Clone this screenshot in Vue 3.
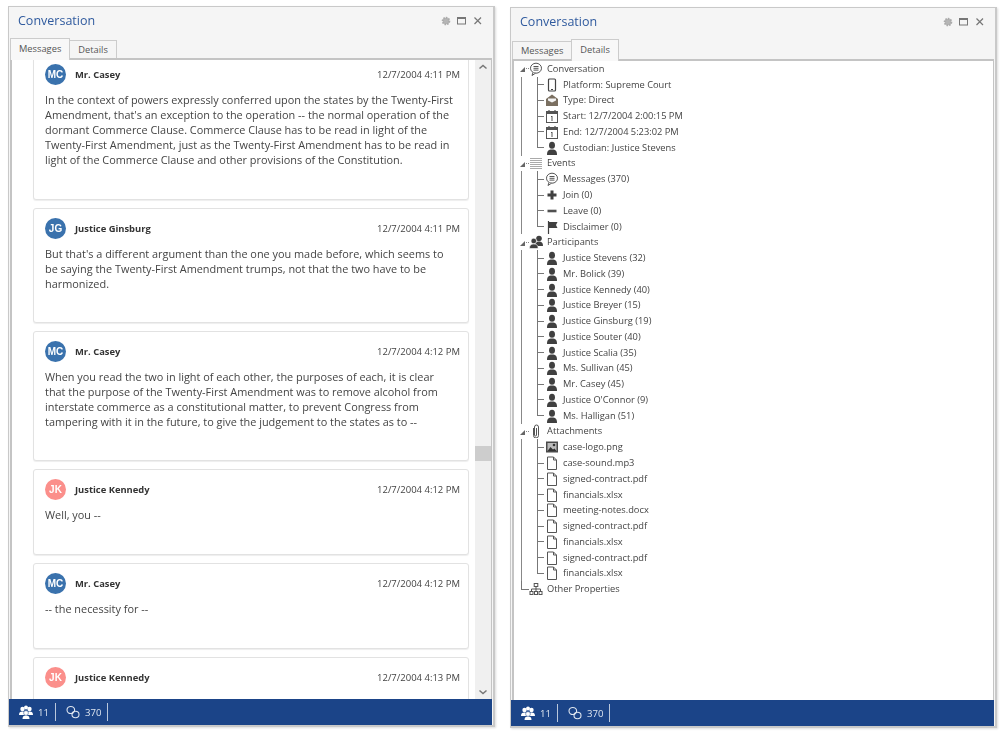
<script setup>
const messages = [
  { i: 'MC', c: 'blue', name: 'Mr. Casey', time: '12/7/2004 4:11 PM', h: 146, lines: ["In the context of powers expressly conferred upon the states by the Twenty-First", "Amendment, that's an exception to the operation -- the normal operation of the", "dormant Commerce Clause. Commerce Clause has to be read in light of the", "Twenty-First Amendment, just as the Twenty-First Amendment has to be read in", "light of the Commerce Clause and other provisions of the Constitution."] },
  { i: 'JG', c: 'blue', name: 'Justice Ginsburg', time: '12/7/2004 4:11 PM', h: 115, lines: ["But that's a different argument than the one you made before, which seems to", "be saying the Twenty-First Amendment trumps, not that the two have to be", "harmonized."] },
  { i: 'MC', c: 'blue', name: 'Mr. Casey', time: '12/7/2004 4:12 PM', h: 130, lines: ["When you read the two in light of each other, the purposes of each, it is clear", "that the purpose of the Twenty-First Amendment was to remove alcohol from", "interstate commerce as a constitutional matter, to prevent Congress from", "tampering with it in the future, to give the judgement to the states as to --"] },
  { i: 'JK', c: 'pink', name: 'Justice Kennedy', time: '12/7/2004 4:12 PM', h: 86, lines: ["Well, you --"] },
  { i: 'MC', c: 'blue', name: 'Mr. Casey', time: '12/7/2004 4:12 PM', h: 86, lines: ["-- the necessity for --"] },
  { i: 'JK', c: 'pink', name: 'Justice Kennedy', time: '12/7/2004 4:13 PM', h: 86, lines: ["-- of the the licenses and permits you will to do it --"] },
]
const sections = [
  { label: 'Conversation', icon: 'chat', open: true, items: [
    ['Platform: Supreme Court', 'phone'], ['Type: Direct', 'mail'], ['Start: 12/7/2004 2:00:15 PM', 'cal'], ['End: 12/7/2004 5:23:02 PM', 'cal'], ['Custodian: Justice Stevens', 'person'] ] },
  { label: 'Events', icon: 'list', open: true, items: [
    ['Messages (370)', 'chat'], ['Join (0)', 'plus'], ['Leave (0)', 'minus'], ['Disclaimer (0)', 'flag'] ] },
  { label: 'Participants', icon: 'people', open: true, items: [
    'Justice Stevens (32)', 'Mr. Bolick (39)', 'Justice Kennedy (40)', 'Justice Breyer (15)', 'Justice Ginsburg (19)', 'Justice Souter (40)', 'Justice Scalia (35)', 'Ms. Sullivan (45)', 'Mr. Casey (45)', "Justice O'Connor (9)", 'Ms. Halligan (51)' ].map(n => [n, 'person']) },
  { label: 'Attachments', icon: 'clip', open: true, items: [
    ['case-logo.png', 'image'], ...['case-sound.mp3', 'signed-contract.pdf', 'financials.xlsx', 'meeting-notes.docx', 'signed-contract.pdf', 'financials.xlsx', 'signed-contract.pdf', 'financials.xlsx'].map(n => [n, 'file']) ] },
  { label: 'Other Properties', icon: 'org', open: false, items: [] },
]
const icons = {
  chat: '<ellipse cx="7" cy="6.200" rx="5.500" ry="5" fill="none" stroke="#555" stroke-width="1"/><path d="M4 10.500l-1 3 3.500-2.300" fill="#fff" stroke="#555"/><path d="M4.500 4.500h5M4.500 6.300h5M4.500 8.100h5" stroke="#555"/>',
  phone: '<rect x="3.500" y="1" width="7" height="12" rx="1" fill="none" stroke="#444" stroke-width="1.200"/><path d="M6 11.500h2" stroke="#444"/>',
  mail: '<path d="M1 6l6-4.500L13 6v7H1z" fill="#7a6f60"/><path d="M3 5.500h8v2L7 9.500l-4-2z" fill="#f4f4f4"/>',
  cal: '<rect x="1.500" y="2.500" width="11" height="11" fill="#fff" stroke="#555"/><rect x="1.500" y="2.500" width="11" height="2.500" fill="#555"/><path d="M4 1v2M10 1v2" stroke="#555" stroke-width="1.200"/><path d="M7 7v5M6 8l1-1" stroke="#555"/>',
  person: '<ellipse cx="7" cy="4.300" rx="3" ry="3.500" fill="#404040"/><path d="M2 14c0-4 1.200-5.500 5-5.500s5 1.500 5 5.500z" fill="#404040"/>',
  list: '<path d="M1 2.500h12M1 4.500h12M1 6.500h12M1 8.500h12M1 10.500h12M1 12.500h12" stroke="#aaa"/>',
  plus: '<path d="M7 2.500v9M2.500 7h9" stroke="#404040" stroke-width="3"/>',
  minus: '<path d="M2.500 7h9" stroke="#505050" stroke-width="2.600"/>',
  flag: '<path d="M3.500 1v13" stroke="#404040" stroke-width="1.200"/><path d="M4 2h8.500l-1.500 3 1.500 3H4z" fill="#404040"/>',
  people: '<circle cx="10" cy="3.500" r="2.800" fill="#404040"/><path d="M6 11c0-3 1-4.500 4-4.500s4 1.500 4 4.500z" fill="#404040"/><circle cx="4.800" cy="6" r="2.800" fill="#404040" stroke="#fff" stroke-width=".6"/><path d="M.5 13.500c0-3 1-4.500 4.300-4.500s4.300 1.500 4.300 4.500z" fill="#404040" stroke="#fff" stroke-width=".6"/>',
  clip: '<path d="M4.500 4v7.500a2.500 2.500 0 0 0 5 0V3a2 2 0 0 0-4 0v8a1 1 0 0 0 2 0V4" fill="none" stroke="#555" stroke-width="1"/>',
  image: '<rect x="1" y="1.500" width="12" height="11" fill="#4a4a4a"/><rect x="2.500" y="3" width="9" height="8" fill="#bbb"/><circle cx="9" cy="5" r="1.300" fill="#333"/><path d="M2.500 11l3-4 2.500 2.500 1.500-1 2 2.500z" fill="#333"/>',
  file: '<path d="M2.500 1h6l3 3v9.500h-9z" fill="#fff" stroke="#555"/><path d="M8.500 1v3h3" fill="none" stroke="#555"/>',
  org: '<rect x="5.200" y="1.500" width="3.600" height="3" fill="none" stroke="#555"/><path d="M7 4.500v2.500M2.500 9V7h9v2M7 7v2" fill="none" stroke="#555"/><rect x="1" y="9.500" width="3" height="3" fill="none" stroke="#555"/><rect x="5.500" y="9.500" width="3" height="3" fill="none" stroke="#555"/><rect x="10" y="9.500" width="3" height="3" fill="none" stroke="#555"/>',
}
const statusPeople = '<circle cx="3.500" cy="4" r="2.200" fill="#fff"/><circle cx="10.500" cy="4" r="2.200" fill="#fff"/><circle cx="7" cy="2.500" r="2" fill="#fff"/><path d="M0 10c0-2.500 1-3.500 3.500-3.500S7 7.500 7 10zM7 10c0-2.500 1-3.500 3.500-3.500S14 7.500 14 10z" fill="#fff"/><circle cx="7" cy="8" r="2.400" fill="#fff" stroke="#1b4488" stroke-width=".5"/><path d="M3.500 14c0-2.500 1-3.500 3.500-3.500s3.500 1 3.500 3.500z" fill="#fff"/>'
const statusChat = '<ellipse cx="4.800" cy="5" rx="3.800" ry="3.500" fill="none" stroke="#dfe6f0" stroke-width="1.100"/><ellipse cx="9.500" cy="9.500" rx="3.500" ry="3.200" fill="none" stroke="#dfe6f0" stroke-width="1.100"/>'
</script>

<template>
  <div class="page">
    <section class="win left">
      <header class="head">
        <h1>Conversation</h1>
        <div class="controls">
          <svg width="10" height="10" viewBox="0 0 10 10"><circle cx="5" cy="5" r="3.300" fill="#b5b5b5" stroke="#aaa" stroke-width="2" stroke-dasharray="1.500 1"/></svg>
          <svg width="10" height="10" viewBox="0 0 10 10"><rect x=".5" y="1.500" width="8" height="6.500" fill="none" stroke="#777"/><path d="M.5 2.500h8" stroke="#777"/></svg>
          <svg width="10" height="10" viewBox="0 0 10 10"><path d="M1.500 1.500l6.500 6.500M8 1.500L1.500 8" stroke="#777" stroke-width="1.200"/></svg>
        </div>
      </header>
      <nav class="tabs">
        <span class="tab on">Messages</span>
        <span class="tab">Details</span>
      </nav>
      <div class="body">
        <div class="msgs">
          <div class="list">
            <article v-for="(m, k) in messages" :key="k" class="card" :style="{ height: m.h + 'px' }">
              <div class="top">
                <span class="av" :class="m.c">{{ m.i }}</span>
                <b class="name">{{ m.name }}</b>
                <span class="time">{{ m.time }}</span>
              </div>
              <p class="text">
                <span v-for="(l, n) in m.lines" :key="n" class="ln">{{ l }}</span>
              </p>
            </article>
          </div>
        </div>
        <aside class="sb">
          <svg class="arr" width="16" height="12" viewBox="0 0 16 12"><path d="M4.500 7.500L8 4.500l3.500 3" fill="none" stroke="#777" stroke-width="1.500"/></svg>
          <span class="thumb-gap"></span>
          <span class="thumb"></span>
          <span class="thumb-rest"></span>
          <svg class="arr end" width="16" height="12" viewBox="0 0 16 12"><path d="M4.500 4.500L8 7.500l3.500-3" fill="none" stroke="#777" stroke-width="1.500"/></svg>
        </aside>
      </div>
      <footer class="status">
        <span class="st"><svg width="14" height="15" viewBox="0 0 14 15" v-html="statusPeople"></svg>11</span>
        <i class="sep"></i>
        <span class="st"><svg width="14" height="15" viewBox="0 0 14 15" v-html="statusChat"></svg>370</span>
        <i class="sep"></i>
      </footer>
    </section>

    <section class="win right">
      <header class="head">
        <h1>Conversation</h1>
        <div class="controls">
          <svg width="10" height="10" viewBox="0 0 10 10"><circle cx="5" cy="5" r="3.300" fill="#b5b5b5" stroke="#aaa" stroke-width="2" stroke-dasharray="1.500 1"/></svg>
          <svg width="10" height="10" viewBox="0 0 10 10"><rect x=".5" y="1.500" width="8" height="6.500" fill="none" stroke="#777"/><path d="M.5 2.500h8" stroke="#777"/></svg>
          <svg width="10" height="10" viewBox="0 0 10 10"><path d="M1.500 1.500l6.500 6.500M8 1.500L1.500 8" stroke="#777" stroke-width="1.200"/></svg>
        </div>
      </header>
      <nav class="tabs">
        <span class="tab">Messages</span>
        <span class="tab on">Details</span>
      </nav>
      <div class="body tree">
        <div v-for="(s, k) in sections" :key="k" class="sec">
          <div class="row root">
            <span v-if="s.open" class="tw"></span>
            <span v-else class="elbow-root"></span>
            <span v-if="s.open" class="dots"></span>
            <svg class="ic" width="14" height="14" viewBox="0 0 14 14" v-html="icons[s.icon]"></svg>
            <span class="lb">{{ s.label }}</span>
          </div>
          <div v-if="s.items.length" class="kids">
            <div v-for="(it, n) in s.items" :key="n" class="row">
              <span class="elbow" :class="{ end: n === s.items.length - 1 }"></span>
              <svg class="ic" width="14" height="14" viewBox="0 0 14 14" v-html="icons[it[1]]"></svg>
              <span class="lb">{{ it[0] }}</span>
            </div>
          </div>
        </div>
      </div>
      <footer class="status">
        <span class="st"><svg width="14" height="15" viewBox="0 0 14 15" v-html="statusPeople"></svg>11</span>
        <i class="sep"></i>
        <span class="st"><svg width="14" height="15" viewBox="0 0 14 15" v-html="statusChat"></svg>370</span>
        <i class="sep"></i>
      </footer>
    </section>
  </div>
</template>

<style>
html, body { margin: 0; background: #fff; }
</style>

<style scoped>
.page {
  width: 1000px; height: 732px; overflow: hidden; box-sizing: border-box;
  display: flex; gap: 15px; padding: 6px 0 0 8px;
  font-family: "Open Sans", "Noto Sans", sans-serif; color: #444;
  filter: blur(0.35px);
}
.win {
  width: 487px; height: 721px; box-sizing: border-box; flex: none;
  display: flex; flex-direction: column;
  background: #f5f5f5; border: 1px solid #c9c9c9; border-width: 1px 2px 2px 1px;
  box-shadow: 1px 1px 2px #ddd;
}
.right { margin-top: 1px; }
.head { height: 31px; display: flex; align-items: center; justify-content: space-between; padding: 0 10px 4px 9px; box-sizing: border-box; flex: none; }
h1 { margin: 0; font-size: 12.500px; font-weight: 400; color: #2f5a9e; }
.controls { display: flex; gap: 6px; }
.tabs { display: flex; height: 20px; flex: none; padding-left: 1px; align-items: flex-end; position: relative; z-index: 1; }
.tab { height: 18px; box-sizing: border-box; border: 1px solid #ccc; border-bottom: 0; padding: 0 8px; font-size: 9.300px; line-height: 18px; color: #555; background: #f5f5f5; }
.tab + .tab { margin-left: -1px; }
.tab.on { height: 22px; margin-bottom: -2px; line-height: 20px; background: #f8f8f8; }
.body { flex: 1; min-height: 0; margin: 0 1px; background: #fff; border: 1px solid #c4c4c4; border-width: 2px 1px 0 2px; display: flex; overflow: hidden; }
.msgs { flex: 1; min-width: 0; overflow: hidden; padding-left: 21px; }
.list { margin-top: -6px; width: 436px; display: flex; flex-direction: column; gap: 8px; }
.card { box-sizing: border-box; flex: none; background: #fff; border: 1px solid #e2e2e2; border-radius: 3px; padding: 9px 8px 0 11px; box-shadow: 0 1px 1px #eee; }
.top { display: flex; align-items: center; height: 21px; }
.av { width: 21px; height: 21px; border-radius: 50%; color: #fff; font: 700 10px/21px "Liberation Sans", sans-serif; text-align: center; flex: none; }
.av.blue { background: #3a72ad; }
.av.pink { background: #fb8f8b; }
.name { margin-left: 9px; font-size: 9.400px; font-weight: 700; color: #333; }
.time { margin-left: auto; font-size: 9.500px; color: #444; }
.text { margin: 7px 0 0; font-size: 10.900px; line-height: 15px; color: #444; }
.ln { display: block; white-space: nowrap; }
.sb { width: 16px; flex: none; background: #f0f0f0; display: flex; flex-direction: column; align-items: stretch; }
.arr { flex: none; display: block; margin: 1px 0 2px; }
.arr.end { margin: 2px 0 1px; }
.thumb-gap { height: 371px; flex: none; }
.thumb { height: 15px; flex: none; background: #cdcdcd; }
.thumb-rest { flex: 1; }
.tree { display: block; background: #fff; font-size: 9.300px; }
.sec { margin-left: 5px; }
.row { display: flex; align-items: center; height: 15.770px; }
.tw { width: 0; height: 0; border-style: solid; border-width: 0 0 5px 5px; border-color: transparent transparent #666 transparent; margin-left: 1px; flex: none; margin-top: 2px; }
.dots { width: 3px; height: 1px; margin-left: 1px; flex: none; background: repeating-linear-gradient(90deg, #888 0 1px, transparent 1px 2px); }
.elbow-root { width: 8px; height: 100%; flex: none; margin-left: 2px; background: linear-gradient(#777, #777) left top / 1px 50% no-repeat, linear-gradient(#777, #777) left 50% / 100% 1px no-repeat; }
.kids { margin-left: 2px; padding-left: 16px; background: linear-gradient(#888, #888) left top / 1px 100% no-repeat; }
.elbow { width: 7px; height: 100%; flex: none; margin-right: 1px; background: linear-gradient(#777, #777) left top / 1px 100% no-repeat, linear-gradient(#777, #777) left 50% / 100% 1px no-repeat; }
.elbow.end { background: linear-gradient(#777, #777) left top / 1px 50% no-repeat, linear-gradient(#777, #777) left 50% / 100% 1px no-repeat; }
.ic { flex: none; display: block; }
.lb { margin-left: 4px; white-space: nowrap; color: #444; margin-top: -1px; }
.status { height: 26px; flex: none; margin-right: 1px; background: #1b4488; color: #dfe6f0; display: flex; align-items: center; font-size: 9.600px; padding-left: 10px; }
.st { display: flex; align-items: center; gap: 5px; }
.sep { width: 1px; height: 18px; background: #b9c7dc; margin: 0 10px 0 6px; }
</style>
